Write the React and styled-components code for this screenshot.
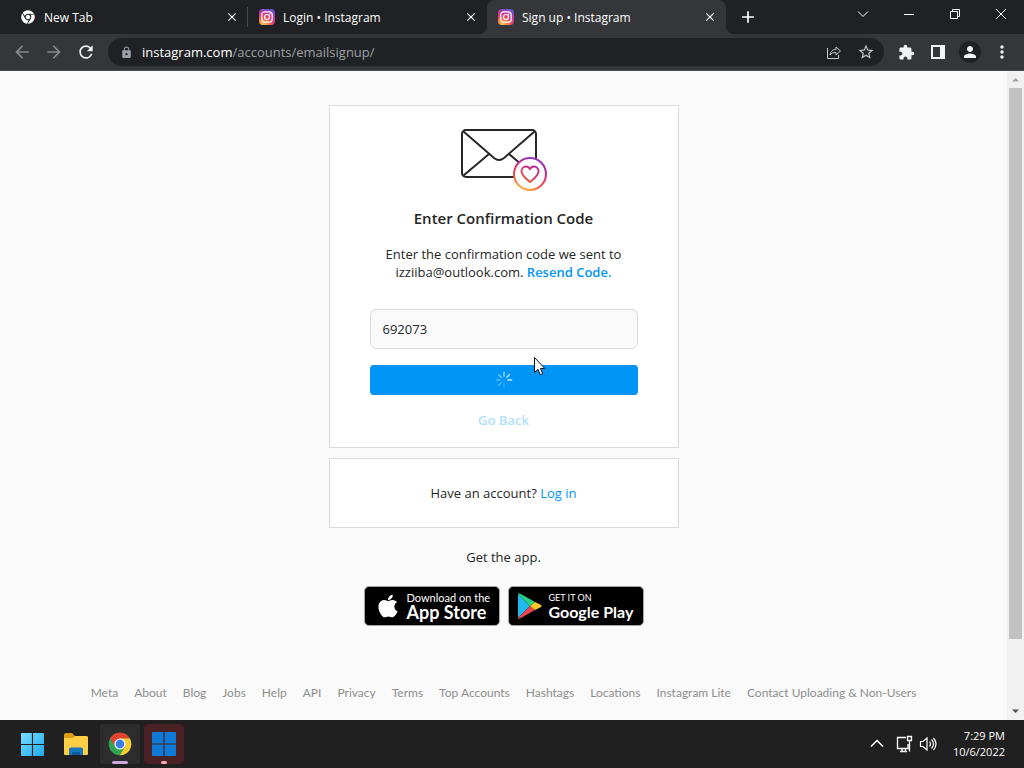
import React, { useState } from 'react'
import styled, { createGlobalStyle, css } from 'styled-components'
import {
  MdAdd,
  MdArrowBack,
  MdArrowForward,
  MdClose,
  MdExtension,
  MdLock,
  MdMoreVert,
  MdPerson,
  MdRefresh,
  MdStarBorder,
} from 'react-icons/md'
import { FaApple, FaChrome } from 'react-icons/fa'

const GlobalStyle = createGlobalStyle`
  * {
    box-sizing: border-box;
  }

  body {
    margin: 0;
    font-family: 'Open Sans', 'Noto Sans', sans-serif;
    font-size: 13px;
    color: #262626;
  }

  button {
    padding: 0;
    border: 0;
    background: none;
    color: inherit;
    font: inherit;
  }

  a {
    text-decoration: none;
  }

  svg {
    display: block;
    flex-shrink: 0;
  }
`

const Desktop = styled.div`
  display: flex;
  flex-direction: column;
  height: 100vh;
  overflow: hidden;
`

/* browser chrome */

const TabStrip = styled.header`
  display: flex;
  height: 34px;
  padding-left: 9px;
  background-color: #202124;
  color: #fff;
`

const Tab = styled.div`
  display: flex;
  position: relative;
  flex: 0 1 239px;
  align-items: center;
  gap: 8px;
  padding: 0 8px 0 11px;
  font-size: 12px;
  white-space: nowrap;

  ${props =>
    props.$divider &&
    css`
      background: linear-gradient(#4a4c50, #4a4c50) right center / 1px 20px
        no-repeat;
    `}

  ${props =>
    props.$active &&
    css`
      background-color: #35363a;
      border-radius: 8px 8px 0 0;

      &::before,
      &::after {
        content: '';
        position: absolute;
        bottom: 0;
        width: 8px;
        height: 8px;
      }

      &::before {
        right: 100%;
        background: radial-gradient(circle at 0 0, transparent 8px, #35363a 8px);
      }

      &::after {
        left: 100%;
        background: radial-gradient(
          circle at 100% 0,
          transparent 8px,
          #35363a 8px
        );
      }
    `}
`

const TabIcon = styled.span`
  display: flex;
  align-items: center;
  justify-content: center;
  width: 16px;
`

const TabTitle = styled.span`
  flex: 1;
  overflow: hidden;
`

const TabButton = styled.button`
  display: flex;
  align-items: center;
  justify-content: center;
  width: 16px;
  height: 16px;
`

const NewTabButton = styled(TabButton)`
  width: 44px;
  height: 34px;
`

const WindowControls = styled.div`
  display: flex;
  margin-left: auto;
`

const WindowButton = styled.button`
  display: flex;
  align-items: center;
  justify-content: center;
  width: 46px;
  height: 28px;
`

const Toolbar = styled.div`
  display: flex;
  align-items: center;
  height: 37px;
  padding: 0 6px;
  background-color: #35363a;
  border-bottom: 1px solid #4a4b4e;
  color: #f1f3f4;
`

const ToolButton = styled.button`
  display: flex;
  align-items: center;
  justify-content: center;
  width: 32px;
  height: 28px;
  color: ${props => props.$color || '#f1f3f4'};
`

const AddressBar = styled.div`
  display: flex;
  flex: 1;
  align-items: center;
  height: 28px;
  margin: 0 6px;
  padding: 0 2px 0 12px;
  border-radius: 14px;
  background-color: #202124;
  color: #9aa0a6;
`

const Address = styled.div`
  flex: 1;
  padding-left: 9px;
  font-size: 13px;
  white-space: nowrap;

  span {
    color: #fff;
  }
`

const Avatar = styled.span`
  display: flex;
  align-items: center;
  justify-content: center;
  width: 22px;
  height: 22px;
  border-radius: 50%;
  background-color: #202124;
`

/* page */

const Viewport = styled.div`
  display: flex;
  flex: 1;
  min-height: 0;
  background-color: #fafafa;
`

const Page = styled.div`
  display: flex;
  flex: 1;
  flex-direction: column;
  align-items: center;
  justify-content: space-between;
  overflow: hidden;
`

const Main = styled.main`
  display: flex;
  flex-direction: column;
  gap: 10px;
  width: 350px;
  padding-top: 34px;
`

const Card = styled.section`
  display: flex;
  flex-direction: column;
  align-items: center;
  padding: 22px 40px 18px;
  border: 1px solid #dbdbdb;
  background-color: #fff;
  line-height: 18px;
  text-align: center;
`

const LoginCard = styled(Card)`
  display: block;
  padding: 25px 40px;
`

const Heading = styled.h1`
  margin: 17px 0 18px;
  font-size: 15px;
  font-weight: 600;
  line-height: 18px;
`

const Message = styled.p`
  margin: 0;
`

const TextLink = styled.a`
  color: #0095f6;
  font-weight: ${props => (props.$bold ? 600 : 400)};
`

const Form = styled.form`
  display: flex;
  flex-direction: column;
  align-items: center;
  gap: 16px;
  width: 100%;
  margin-top: 28px;
`

const CodeInput = styled.input`
  width: 100%;
  height: 40px;
  padding: 0 12px;
  border: 1px solid #dbdbdb;
  border-radius: 6px;
  outline: 0;
  background-color: #fafafa;
  color: #262626;
  font: inherit;
`

const SubmitButton = styled.button`
  display: flex;
  position: relative;
  align-items: center;
  justify-content: center;
  width: 100%;
  height: 30px;
  border-radius: 4px;
  background-color: #0095f6;
`

const Pointer = styled.svg`
  position: absolute;
  top: -9px;
  left: 163px;
`

const BackButton = styled.button`
  color: #b2dffc;
  font-weight: 600;
  line-height: 18px;
`

const GetApp = styled.p`
  margin: 10px 0;
  line-height: 18px;
  text-align: center;
`

const Stores = styled.div`
  display: flex;
  gap: 8px;
  justify-content: center;
`

const StoreBadge = styled.a`
  display: flex;
  align-items: center;
  gap: 6px;
  width: 136px;
  height: 40px;
  padding-left: ${props => (props.$google ? 8 : 10)}px;
  border: 1px solid #a6a6a6;
  border-radius: 5px;
  background-color: #000;
  color: #fff;
  white-space: nowrap;
`

const StoreText = styled.span`
  display: flex;
  flex-direction: column;
  padding-bottom: 2px;
  font-family: Lato, sans-serif;
  font-size: ${props => (props.$google ? 9 : 11)}px;
  line-height: 13px;

  strong {
    font-size: ${props => (props.$google ? 16 : 18)}px;
    font-weight: 700;
    line-height: 16px;
  }
`

const Footer = styled.footer`
  display: flex;
  flex-wrap: wrap;
  justify-content: center;
  gap: 0 16px;
  padding-bottom: 19px;
  font-family: Lato, sans-serif;
  font-size: 12px;
  line-height: 16px;

  a {
    color: #8e8e8e;
  }
`

const Scrollbar = styled.div`
  display: flex;
  flex-direction: column;
  align-items: center;
  width: 17px;
  padding: 6px 0;
  background-color: #f1f1f1;
`

const Thumb = styled.div`
  width: 13px;
  height: 551px;
  margin: 6px 0 auto;
  background-color: #c1c1c1;
`

/* taskbar */

const Taskbar = styled.nav`
  display: flex;
  align-items: center;
  gap: 4px;
  height: 48px;
  padding: 0 19px 0 12px;
  background-color: #202020;
  color: #fff;
`

const TaskButton = styled.button`
  display: flex;
  position: relative;
  align-items: center;
  justify-content: center;
  width: 40px;
  height: 40px;
  border-radius: 4px;
  background-color: ${props => props.$background || 'transparent'};
`

const Indicator = styled.span`
  position: absolute;
  bottom: 0;
  width: ${props => props.$width}px;
  height: 3px;
  border-radius: 2px;
  background-color: ${props => props.$color};
`

const Tray = styled.div`
  display: flex;
  align-items: center;
  gap: 6px;
  margin-left: auto;
`

const Clock = styled.time`
  padding-left: 10px;
  font-size: 11px;
  line-height: 16px;
  text-align: right;

  span {
    display: block;
  }
`

const InstagramIcon = () => (
  <svg width="16" height="16" viewBox="0 0 16 16" fill="none">
    <defs>
      <radialGradient id="insta" cx="0.25" cy="1.05" r="1.1">
        <stop offset="0" stopColor="#ffd45c" />
        <stop offset="0.3" stopColor="#fa8a45" />
        <stop offset="0.58" stopColor="#e53d74" />
        <stop offset="0.8" stopColor="#bc3aa6" />
        <stop offset="1" stopColor="#6650cf" />
      </radialGradient>
    </defs>
    <rect width="16" height="16" rx="4" fill="url(#insta)" />
    <rect x="2.8" y="2.8" width="10.4" height="10.4" rx="3" stroke="#fff" strokeWidth="1.2" />
    <circle cx="8" cy="8" r="2.5" stroke="#fff" strokeWidth="1.2" />
    <circle cx="11" cy="5" r="0.7" fill="#fff" />
  </svg>
)

const EnvelopeIcon = () => (
  <svg width="90" height="64" viewBox="-2 0 90 64" fill="none" strokeLinejoin="round">
    <defs>
      <linearGradient id="ring" x1="0.7" y1="0" x2="0.3" y2="1">
        <stop offset="0" stopColor="#8f35b8" />
        <stop offset="0.4" stopColor="#d02b83" />
        <stop offset="0.7" stopColor="#ee5048" />
        <stop offset="1" stopColor="#fcb23c" />
      </linearGradient>
      <linearGradient id="heart" x1="0.8" y1="0" x2="0.2" y2="1">
        <stop offset="0" stopColor="#b72a9d" />
        <stop offset="1" stopColor="#ee5a32" />
      </linearGradient>
    </defs>
    <g stroke="#262626" strokeWidth="2">
      <rect x="1" y="2" width="74" height="47" rx="4" />
      <path d="M2.5 3.5 33 30q5 4 10 0L73.5 3.5M2.5 47.5 28 26M48 26l25.5 21.5" />
    </g>
    <circle cx="69" cy="46" r="16" fill="#fff" stroke="url(#ring)" strokeWidth="2" />
    <path
      d="M69 54c-4.5-3.8-8.5-6.6-8.5-10.8 0-2.7 2-4.7 4.4-4.7 2 0 3.3 1 4.1 2.6.8-1.6 2.1-2.6 4.1-2.6 2.4 0 4.4 2 4.4 4.7C77.5 47.4 73.5 50.2 69 54z"
      stroke="url(#heart)"
      strokeWidth="2"
    />
  </svg>
)

const spokes = [0.7, 0.8, 1, 0.05, 0.15, 0.35, 0.4, 0.5]

const Spinner = () => (
  <svg width="18" height="18" viewBox="0 0 18 18" stroke="#c4f1ff" strokeWidth="1.6" strokeLinecap="round">
    {spokes.map((opacity, i) => (
      <path key={i} d="M9 1.5v3.5" opacity={opacity} transform={`rotate(${i * 45} 9 9)`} />
    ))}
  </svg>
)

const PlayIcon = () => (
  <svg width="26" height="28" viewBox="0 0 26 28">
    <path d="M1 2v24l12-12z" fill="#20b9ef" />
    <path d="M1 2q.8-1 2-.4L18 10l-5 4z" fill="#25d080" />
    <path d="M1 26q.8 1 2 .4L18 18l-5-4z" fill="#ea4453" />
    <path d="M18 10l6 3q1.5 1 0 2l-6 3-5-4z" fill="#fec62b" />
  </svg>
)

const ChromeIcon = () => (
  <svg width="24" height="24" viewBox="0 0 24 24">
    <circle cx="12" cy="12" r="11.3" fill="#2fa34f" />
    <path d="M12 12 7.3 14.7 2.2 6.4a11.3 11.3 0 0 1 19.6 0H12z" fill="#e5412f" />
    <path d="M12 6.4h9.8A11.3 11.3 0 0 1 12 23.3l4.9-8.5z" fill="#fccb2e" />
    <circle cx="12" cy="12" r="5.6" fill="#fff" />
    <circle cx="12" cy="12" r="4.4" fill="#3b7ee8" />
  </svg>
)

const WindowsIcon = ({ size, fill }) => (
  <svg width={size} height={size} viewBox="0 0 24 24" fill={fill}>
    <defs>
      <linearGradient id="win" x1="0" y1="0" x2="24" y2="24" gradientUnits="userSpaceOnUse">
        <stop offset="0" stopColor="#7adcff" />
        <stop offset="1" stopColor="#1caaf2" />
      </linearGradient>
    </defs>
    <path d="M1 0h10.4v11.4H0V1q0-1 1-1zM12.6 0H23q1 0 1 1v10.4H12.6zM0 12.6h11.4V24H1q-1 0-1-1zM12.6 12.6H24V23q0 1-1 1H12.6z" />
  </svg>
)

const FolderIcon = () => (
  <svg width="26" height="24" viewBox="0 0 26 24">
    <path d="M1 3q0-2 2-2h6l3 3h11q2 0 2 2v4H1z" fill="#dc9b13" />
    <path d="M1 6h9l2-2h11q2 0 2 2v16q0 1-1 1H2q-1 0-1-1z" fill="#ffce45" />
    <path d="M6 23v-6q0-1.5 1.5-1.5h11Q20 15.5 20 17v6z" fill="#1777bc" />
    <path d="M9 23v-3h8v3z" fill="#0f5b99" />
  </svg>
)

const Line = ({ width = 16, height = 16, d, stroke = 1 }) => (
  <svg
    width={width}
    height={height}
    viewBox={`0 0 ${width} ${height}`}
    fill="none"
    stroke="currentColor"
    strokeWidth={stroke}
  >
    <path d={d} />
  </svg>
)

const tabs = [
  { title: 'New Tab', icon: <FaChrome size={14} />, divider: true },
  { title: 'Login • Instagram', icon: <InstagramIcon /> },
  { title: 'Sign up • Instagram', icon: <InstagramIcon />, active: true },
]

const footerLinks = [
  'Meta',
  'About',
  'Blog',
  'Jobs',
  'Help',
  'API',
  'Privacy',
  'Terms',
  'Top Accounts',
  'Hashtags',
  'Locations',
  'Instagram Lite',
  'Contact Uploading & Non-Users',
]

const BrowserBar = () => (
  <>
    <TabStrip>
      {tabs.map(tab => (
        <Tab key={tab.title} $active={tab.active} $divider={tab.divider}>
          <TabIcon>{tab.icon}</TabIcon>
          <TabTitle>{tab.title}</TabTitle>
          <TabButton aria-label="Close tab">
            <MdClose size={14} />
          </TabButton>
        </Tab>
      ))}
      <NewTabButton aria-label="New tab">
        <MdAdd size={20} />
      </NewTabButton>
      <WindowControls>
        <WindowButton aria-label="Search tabs">
          <Line d="M3 5.5 8 10.5l5-5" />
        </WindowButton>
        <WindowButton aria-label="Minimize">
          <Line d="M3 8.5h10" />
        </WindowButton>
        <WindowButton aria-label="Restore">
          <Line d="M3.5 5.5h7v7h-7zM5.5 5.5v-2h7v7h-2" />
        </WindowButton>
        <WindowButton aria-label="Close window">
          <Line d="M3 3l10 10M13 3 3 13" />
        </WindowButton>
      </WindowControls>
    </TabStrip>
    <Toolbar>
      <ToolButton $color="#86888b" aria-label="Back">
        <MdArrowBack size={20} />
      </ToolButton>
      <ToolButton $color="#86888b" aria-label="Forward">
        <MdArrowForward size={20} />
      </ToolButton>
      <ToolButton aria-label="Reload">
        <MdRefresh size={20} />
      </ToolButton>
      <AddressBar>
        <MdLock size={13} />
        <Address>
          <span>instagram.com</span>/accounts/emailsignup/
        </Address>
        <ToolButton $color="#c4c7ca" aria-label="Share">
          <Line d="M1.5 4v10.5h11V11M4 11c.5-4 3-5.5 6-5.5V3l4.5 4L10 11V8.5c-3 0-4.5.5-6 2.5z" />
        </ToolButton>
        <ToolButton $color="#c4c7ca" aria-label="Bookmark this page">
          <MdStarBorder size={18} />
        </ToolButton>
      </AddressBar>
      <ToolButton aria-label="Extensions">
        <MdExtension size={17} />
      </ToolButton>
      <ToolButton aria-label="Side panel">
        <svg width="14" height="14" viewBox="0 0 14 14">
          <path d="M0 0h14v14H0zM2 2v10h7V2z" fill="currentColor" fillRule="evenodd" />
        </svg>
      </ToolButton>
      <ToolButton aria-label="Profile">
        <Avatar>
          <MdPerson size={18} />
        </Avatar>
      </ToolButton>
      <ToolButton aria-label="Menu">
        <MdMoreVert size={20} />
      </ToolButton>
    </Toolbar>
  </>
)

const ConfirmationCard = () => {
  const [code, setCode] = useState('692073')

  return (
    <Card>
      <EnvelopeIcon />
      <Heading>Enter Confirmation Code</Heading>
      <Message>
        Enter the confirmation code we sent to
        <br />
        izziiba@outlook.com.{' '}
        <TextLink $bold href="#resend">
          Resend Code.
        </TextLink>
      </Message>
      <Form onSubmit={e => e.preventDefault()}>
        <CodeInput
          aria-label="Confirmation Code"
          value={code}
          onChange={e => setCode(e.target.value)}
        />
        <SubmitButton type="submit" aria-label="Next">
          <Spinner />
          <Pointer width="14" height="22" viewBox="0 0 14 22">
            <path
              d="M1.5 1.5v15l3.5-3.2 2.3 5.4 2.4-1-2.3-5.2h4.5z"
              fill="#fff"
              stroke="#111"
            />
          </Pointer>
        </SubmitButton>
        <BackButton type="button">Go Back</BackButton>
      </Form>
    </Card>
  )
}

const App = () => (
  <>
    <GlobalStyle />
    <Desktop>
      <BrowserBar />
      <Viewport>
        <Page>
          <Main>
            <ConfirmationCard />
            <LoginCard>
              Have an account? <TextLink href="#login">Log in</TextLink>
            </LoginCard>
            <GetApp>Get the app.</GetApp>
            <Stores>
              <StoreBadge href="#app-store">
                <FaApple size={26} />
                <StoreText>
                  Download on the
                  <strong>App Store</strong>
                </StoreText>
              </StoreBadge>
              <StoreBadge $google href="#google-play">
                <PlayIcon />
                <StoreText $google>
                  GET IT ON
                  <strong>Google Play</strong>
                </StoreText>
              </StoreBadge>
            </Stores>
          </Main>
          <Footer>
            {footerLinks.map(link => (
              <a key={link} href="#footer">
                {link}
              </a>
            ))}
          </Footer>
        </Page>
        <Scrollbar>
          <svg width="7" height="5" viewBox="0 0 7 5">
            <path d="M0 4.5 3.5 1 7 4.5z" fill="#a3a3a3" />
          </svg>
          <Thumb />
          <svg width="7" height="5" viewBox="0 0 7 5">
            <path d="M0 .5 3.5 4 7 .5z" fill="#505050" />
          </svg>
        </Scrollbar>
      </Viewport>
      <Taskbar>
        <TaskButton aria-label="Start">
          <WindowsIcon size={23} fill="url(#win)" />
        </TaskButton>
        <TaskButton aria-label="File Explorer">
          <FolderIcon />
        </TaskButton>
        <TaskButton $background="#2d2d2d" aria-label="Google Chrome">
          <ChromeIcon />
          <Indicator $width={16} $color="#d1a5df" />
        </TaskButton>
        <TaskButton $background="#4a2125" aria-label="Windows app">
          <WindowsIcon size={24} fill="#0f7bd8" />
          <Indicator $width={6} $color="#f5a9b4" />
        </TaskButton>
        <Tray>
          <Line width={24} d="M6 10.5 12 4.5l6 6" stroke={1.5} />
          <Line
            width={18}
            height={18}
            d="M11 2.5H2.5v11H13V9M5 16.5h7M7 13.5v3M10.5 13.5v3M12.5 1.5h4v4h-4zM14.5 5.5v11"
            stroke={1.3}
          />
          <Line
            width={18}
            height={18}
            d="M1.5 6.5v5H4l4 3.5V3L4 6.5zM10.5 6.5q2 2.5 0 5M12.5 4.5q4 4.5 0 9M14.5 3q5 6 0 12"
            stroke={1.2}
          />
          <Clock>
            <span>7:29 PM</span>
            <span>10/6/2022</span>
          </Clock>
        </Tray>
      </Taskbar>
    </Desktop>
  </>
)

export default App
